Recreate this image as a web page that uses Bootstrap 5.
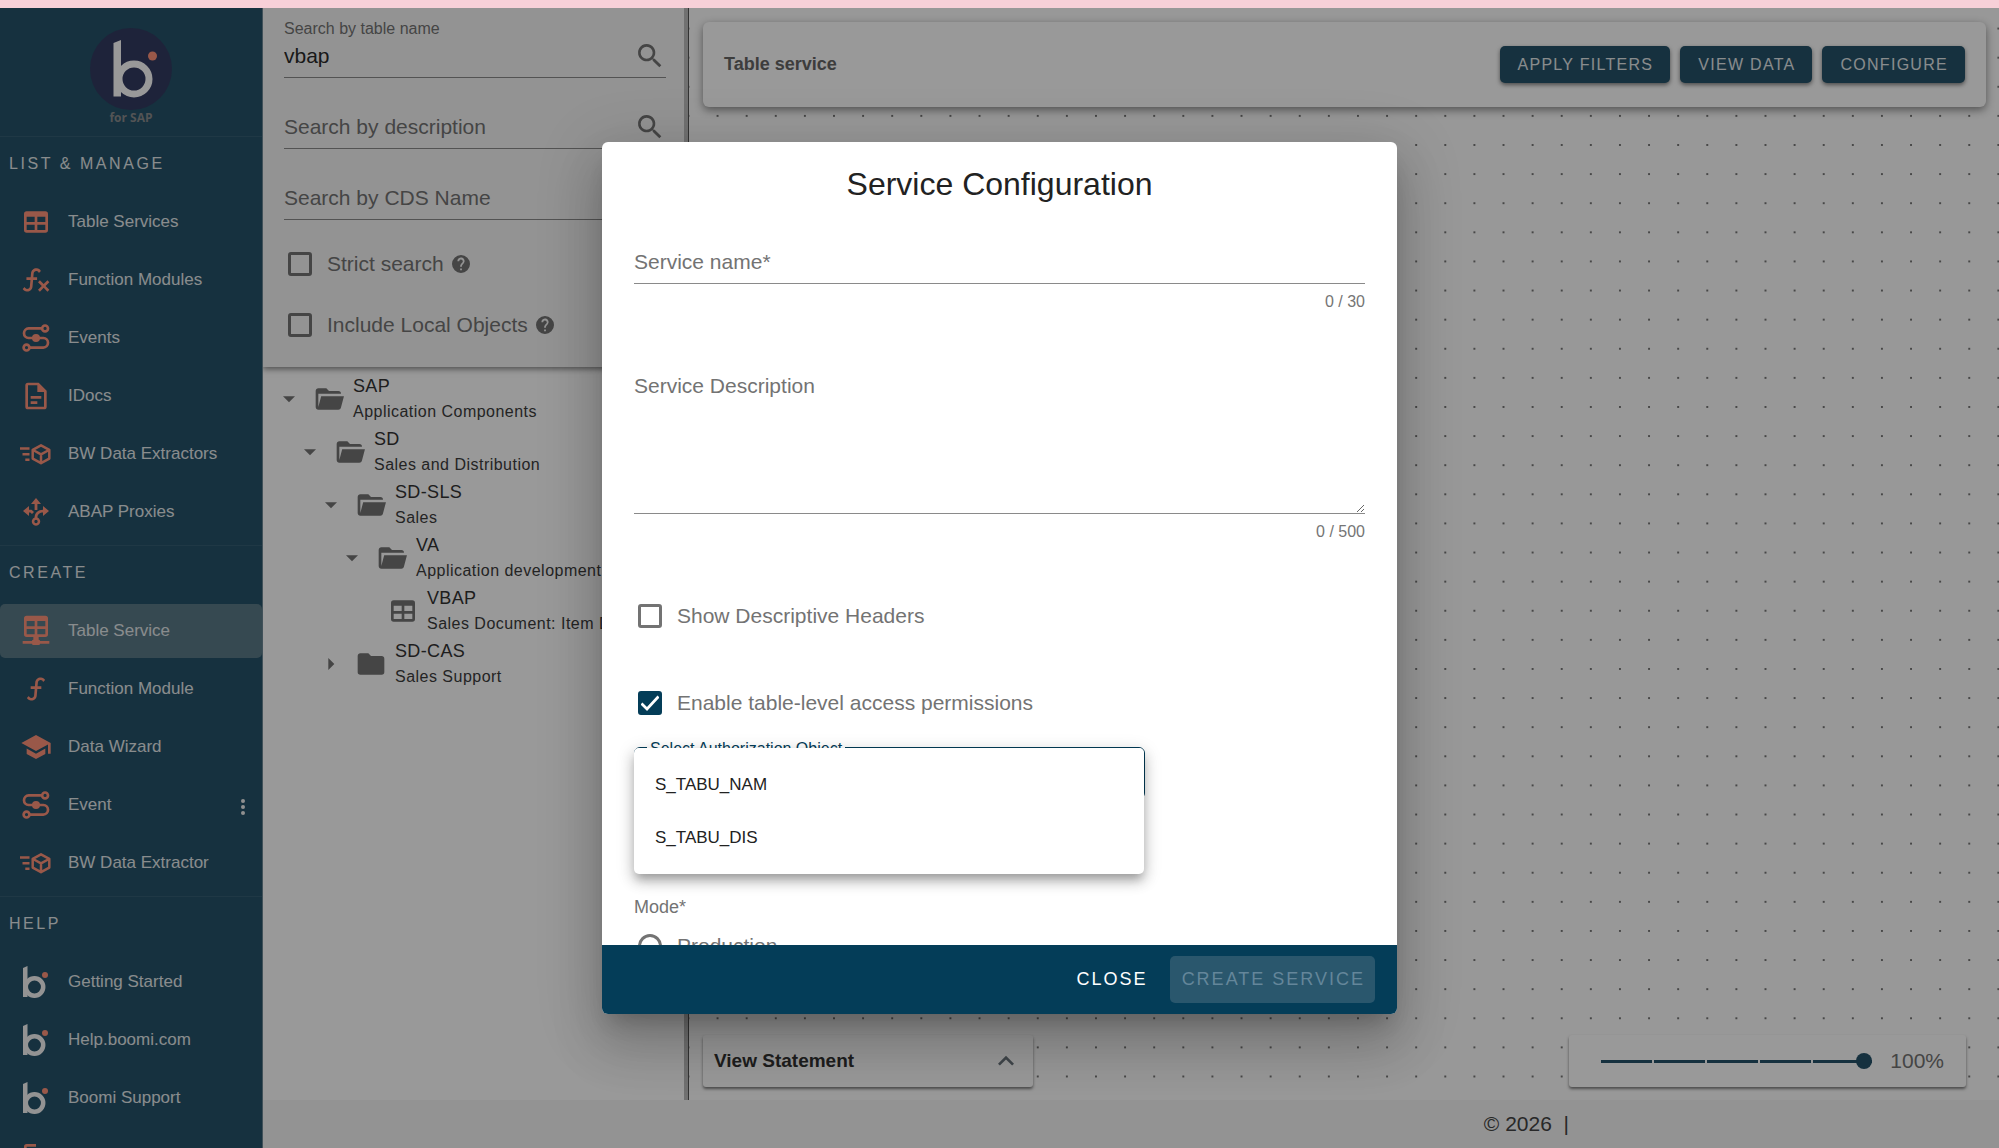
<!DOCTYPE html>
<html lang="en">
<head>
<meta charset="utf-8">
<meta name="viewport" content="width=device-width, initial-scale=1">
<title>Boomi for SAP - Table service</title>
<link href="https://cdn.jsdelivr.net/npm/bootstrap@5.3.0/dist/css/bootstrap.min.css" rel="stylesheet">
<style>
  :root { --brand: #043d58; --nav: #255269; --salmon: #ff937b; --ink: #737373; }
  body { font-family: "Liberation Sans", Arial, sans-serif; font-size: 21px; line-height: 26px; color: #333; background: #fff; }
  .env-strip { height: 8px; background: #f7d0d8; }
  .ico { width: 32px; height: 32px; fill: currentColor; flex: none; }

  /* sidebar */
  .side { width: 263px; background: var(--nav); border-right: 1px solid #6d8794; color: #e4e9ec; }
  .side-logo { height: 129px; padding-top: 20px; border-bottom: 1px solid #345e73; }
  .side-logo span { font: 700 12px/16px "Open Sans", sans-serif; color: #8a8c8e; }
  .side-group { padding-bottom: 4px; border-bottom: 1px solid #345e73; }
  .side-head { font-size: 16px; line-height: 54px; height: 56px; margin: 0; padding-left: 9px; letter-spacing: .16em; font-weight: 400; }
  .side-list { gap: 4px; padding: 2px 0; }
  .side-link { height: 54px; padding: 0 16px 0 20px; gap: 16px; font-size: 17px; color: inherit; text-decoration: none; border-radius: 5px; }
  .side-link .ico { color: var(--salmon); }
  .side-link.current { background: #5a7a87; }
  .more-btn { width: 6px; color: #f0f0f0; }

  /* explorer */
  .explorer { width: 421px; }
  .search-box { background: #f6f6f6; padding: 12px 18px 27px 21px; box-shadow: 0 2px 6px rgba(0,0,0,.5); z-index: 1; }
  .gap-fields { gap: 13px; }
  .line-field { position: relative; display: block; border-bottom: 1px solid #8a8a8a; color: var(--ink); }
  .line-field > label { position: absolute; left: 0; pointer-events: none; }
  .line-field > input, .line-field > textarea { display: block; width: 100%; border: 0; padding: 0; background: none; outline: 0; color: #2b2b2b; font-size: 21px; }
  .line-field.search { height: 58px; }
  .line-field.search > input { height: 44px; margin-top: 14px; }
  .line-field.search > label { top: 23px; }
  .line-field.search.filled > label { top: 1px; font-size: 16px; line-height: 16px; }
  .line-field .ico { position: absolute; right: 0; top: 20px; }
  .checks { padding-top: 29px; gap: 31px; }
  .tick-row { height: 30px; gap: 15px; padding-left: 4px; color: var(--ink); }
  .tick-row .form-check-input { width: 24px; height: 24px; margin: 0; border: 3px solid var(--ink); border-radius: 3px; flex: none; background-color: transparent; }
  .tick-row .form-check-input[type=radio] { border-radius: 50%; }
  .tick-row .form-check-input:checked { background: var(--brand) url("data:image/svg+xml,%3Csvg xmlns='http://www.w3.org/2000/svg' viewBox='0 0 24 24'%3E%3Cpath fill='none' stroke='%23fff' stroke-width='2.700' d='M3.500 12.500L9 18L20.500 5.500'/%3E%3C/svg%3E") center / 24px no-repeat; border-color: var(--brand); background-origin: border-box; }
  .hint { width: 18px; height: 18px; margin-left: -7px; }
  .tree { padding-top: 5px; }
  .tree-row { height: 53px; gap: 8px; padding-left: 10px; color: #737373; white-space: nowrap; }
  .tree-row .t1 { display: block; font-size: 18px; letter-spacing: .02em; color: #333; }
  .tree-row .t2 { display: block; font-size: 16px; letter-spacing: .03em; color: #3c3c3c; }
  .lv1 { padding-left: 31px; } .lv2 { padding-left: 52px; } .lv3 { padding-left: 73px; } .lv4 { padding-left: 124px; }
  .splitter { width: 5px; background: #bdbdbd; border-right: 1px solid #555; }

  /* canvas */
  .work { min-width: 0; }
  .board { background: #fdfdfd radial-gradient(circle, #777 1px, transparent 1px) 14px 6px / calc(100% / 45) calc(200% / 75); padding: 14px 13px 13px 14px; }
  .panel { background: #fff; border-radius: 6px; }
  .board-bar { height: 85px; padding: 0 21px; box-shadow: 0 3px 8px rgba(0,0,0,.45); }
  .board-bar h1 { font-size: 18px; font-weight: 700; color: #666; margin: 0; }
  .board-btns { gap: 10px; }
  .btn-brand { --bs-btn-bg: var(--nav); --bs-btn-color: #e4e9ec; --bs-btn-hover-bg: #1d465b; --bs-btn-hover-color: #fff; font-size: 16px; line-height: 37px; padding: 0 17px 0 18px; border: 0; border-radius: 5px; letter-spacing: .08em; box-shadow: 0 2px 4px rgba(0,0,0,.5); }
  .board-foot { height: 52px; border-radius: 3px; box-shadow: 0 2px 3px rgba(0,0,0,.5); }
  .statement { width: 330px; padding: 0 11px; border: 0; font-size: 19px; font-weight: 700; color: #333; }
  .zoom-ctl { width: 397px; padding: 0 22px 0 32px; margin-right: 20px; color: #737373; }
  .zoom-ctl input { appearance: none; width: 271px; height: 16px; margin: 0; background: repeating-linear-gradient(90deg, var(--nav) 0 51px, #fff 51px 53px) center / 100% 3px no-repeat; }
  .zoom-ctl input::-webkit-slider-thumb { appearance: none; width: 16px; height: 16px; border-radius: 50%; background: var(--nav); }
  .site-foot { height: 48px; background: #f5f5f5; padding-right: 430px; white-space: pre; color: #444; }

  /* dialog */
  .veil { position: absolute; inset: 0; background: rgba(0,0,0,.4); z-index: 5; }
  .dlg { width: 795px; height: calc(100vh - 276px); background: #fff; border-radius: 6px; overflow: hidden; box-shadow: 0 15px 20px -9px rgba(0,0,0,.2), 0 32px 50px 4px rgba(0,0,0,.14), 0 12px 61px 11px rgba(0,0,0,.12); }
  .dlg-body { padding: 0 32px; min-height: 0; overflow: hidden; }
  .dlg-body > * { flex: none; }
  .dlg-title { font-size: 32px; line-height: 84px; font-weight: 400; color: #222; margin: 0 0 15px; text-align: center; }
  .line-field.name > input { height: 42px; }
  .line-field.name > label, .line-field.desc > label { top: 8px; }
  .line-field.desc { margin-top: 51px; }
  .line-field.desc > textarea { height: 148px; resize: vertical; }
  .counter { font-size: 16px; line-height: 24px; margin-top: 6px; text-align: right; color: #757575; }
  .opt-checks { padding-top: 57px; gap: 57px; }
  .pick { position: relative; width: 511px; height: 52px; margin-top: 29px; }
  .pick select { width: 100%; height: 100%; border: 1px solid var(--brand); border-radius: 6px; background: #fff; appearance: none; }
  .pick > label { position: absolute; top: -7px; left: 13px; padding: 0 3px; background: #fff; font-size: 16px; line-height: 18px; color: var(--brand); }
  .pick-menu { position: absolute; top: 1px; left: 0; width: 510px; margin: 0; padding: 10px 0; list-style: none; background: #fff; border-radius: 5px; box-shadow: 0 7px 9px -3px rgba(0,0,0,.2), 0 7px 13px 1px rgba(0,0,0,.16), 0 4px 18px 2px rgba(0,0,0,.12); }
  .pick-menu li { font-size: 17px; line-height: 53px; padding: 0 21px; color: #222; }
  .mode-head { font-size: 18px; font-weight: 400; line-height: 26px; color: var(--ink); margin: 95px 0 11px; }
  .dlg-foot { height: 69px; background: var(--brand); padding-right: 22px; gap: 12px; flex: none; }
  .dlg-foot .btn { font-size: 18px; line-height: 47px; padding: 0 10px 0 12px; border: 0; border-radius: 5px; letter-spacing: 2px; color: #fff; }
  .dlg-foot .btn:disabled { background: #2a576d; color: #64869a; opacity: 1; }
</style>
</head>
<body class="vh-100 overflow-hidden d-flex flex-column">

<svg class="d-none" aria-hidden="true">
  <symbol id="i-table" viewBox="0 0 24 24"><path d="M5,4H19A2,2 0 0,1 21,6V18A2,2 0 0,1 19,20H5A2,2 0 0,1 3,18V6A2,2 0 0,1 5,4M5,8V12H11V8H5M13,8V12H19V8H13M5,14V18H11V14H5M13,14V18H19V14H13Z"/></symbol>
  <symbol id="i-tablenet" viewBox="0 0 24 24"><path d="M5,.5H19A2,2 0 0,1 21,2.500V14.500A2,2 0 0,1 19,16.500H14V18.500A1,1 0 0,1 15,19.500H22V21.500H15A1,1 0 0,1 14,22.500H10A1,1 0 0,1 9,21.500H2V19.500H9A1,1 0 0,1 10,18.500V16.500H5A2,2 0 0,1 3,14.500V2.500A2,2 0 0,1 5,.5M5,4.500V8.500H11V4.500H5M13,4.500V8.500H19V4.500H13M5,10.500V14.500H11V10.500H5M13,10.500V14.500H19V10.500H13Z"/></symbol>
  <symbol id="i-fx" viewBox="0 0 24 24"><path d="M12.42,5.29C11.32,5.19 10.35,6 10.25,7.11L10,10H12.82V12H9.82L9.38,17.07C9.18,19.27 7.24,20.9 5.04,20.7C3.79,20.59 2.66,19.9 2,18.83L3.5,17.33C3.83,18.38 4.96,18.97 6,18.63C6.78,18.39 7.33,17.7 7.4,16.89L7.82,12H4.82V10H8L8.27,6.93C8.46,4.73 10.39,3.1 12.6,3.28C13.86,3.39 15,4.09 15.66,5.17L14.16,6.67C13.91,5.9 13.23,5.36 12.42,5.29M22,13.65L20.59,12.24L17.76,15.07L14.93,12.24L13.5,13.65L16.35,16.5L13.5,19.31L14.93,20.72L17.76,17.89L20.59,20.72L22,19.31L19.17,16.5L22,13.65Z"/></symbol>
  <symbol id="i-f" viewBox="0 0 24 24"><path d="M15.6,5.29C14.5,5.19 13.53,6 13.43,7.11L13.18,10H16V12H13L12.56,17.07C12.37,19.27 10.43,20.9 8.23,20.7C6.92,20.59 5.82,19.86 5.17,18.83L6.67,17.33C6.91,18.07 7.57,18.64 8.4,18.71C9.5,18.81 10.47,18 10.57,16.89L11,12H8V10H11.17L11.44,6.93C11.63,4.73 13.57,3.1 15.77,3.3C17.08,3.41 18.18,4.14 18.83,5.17L17.33,6.67C17.09,5.93 16.43,5.36 15.6,5.29Z"/></symbol>
  <symbol id="i-event" viewBox="0 0 24 24"><g fill="none" stroke="currentColor" stroke-width="2"><circle cx="18.800" cy="4.800" r="2.200"/><circle cx="4.900" cy="19.200" r="2.200"/><path d="M16.500,4.800H6.500A3.600,3.600 0 0,0 3,8.400A3.600,3.600 0 0,0 6.500,12H17.500A3.600,3.600 0 0,1 21,15.600A3.600,3.600 0 0,1 17.500,19.200H7.200"/></g><circle cx="12" cy="12" r="3"/></symbol>
  <symbol id="i-doc" viewBox="0 0 24 24"><path d="M6,2A2,2 0 0,0 4,4V20A2,2 0 0,0 6,22H18A2,2 0 0,0 20,20V8L14,2H6M6,4H13V9H18V20H6V4M8,12V14H16V12H8M8,16V18H13V16H8Z"/></symbol>
  <symbol id="i-cube" viewBox="0 0 32 32"><g fill="none" stroke="currentColor" stroke-width="2.500" stroke-linejoin="round"><path d="M21,7.300L29.300,11.800V20.600L21,25.200L12.700,20.600V11.800ZM13,12L21,16.400L29,12M21,16.400V25"/><path d="M-.5,10.600H9.500M2.500,16.200H9.500M5.300,21.800H9.500"/></g></symbol>
  <symbol id="i-proxy" viewBox="0 0 32 32"><path d="M16,2L21,8H17.400V14H14.600V8H11ZM3,15L9,10V13.700H11.500L14,16L12,18L10.300,16.400H9V20ZM29,15L23,10V13.700C18,13.700 14.600,17 14.600,21.500A4.200,4.200 0 1,0 17.400,21.500C17.400,18 20,16.400 23,16.400V20ZM16,23.800A1.700,1.700 0 1,1 16,27.200A1.700,1.700 0 1,1 16,23.800Z"/></symbol>
  <symbol id="i-cap" viewBox="0 0 24 24"><path d="M12,3L1,9L12,15L21,10.090V17H23V9M5,13.180V17.180L12,21L19,17.180V13.180L12,17L5,13.180Z"/></symbol>
  <symbol id="i-boomi" viewBox="0 0 32 32"><path fill="#f6f6f6" d="M3,2L7.500,0V31H3Z"/><circle cx="14.500" cy="21" r="8.700" fill="none" stroke="#f6f6f6" stroke-width="4.500"/><circle cx="25" cy="9" r="3"/></symbol>
  <symbol id="i-exit" viewBox="0 0 24 24"><path d="M5,3H12V5H5V19H12V21H5A2,2 0 0,1 3,19V5A2,2 0 0,1 5,3Z"/></symbol>
  <symbol id="i-search" viewBox="0 0 24 24"><path d="M15.5,14H14.710L14.430,13.730A6.500,6.500 0 1,0 13.730,14.430L14,14.710V15.500L19,20.490L20.490,19ZM9.500,14A4.500,4.500 0 1,1 14,9.500A4.500,4.500 0 0,1 9.500,14Z"/></symbol>
  <symbol id="i-help" viewBox="2 2 20 20"><path d="M12,2A10,10 0 1,0 22,12A10,10 0 0,0 12,2M13,19H11V17H13V19M15.070,11.250L14.170,12.170C13.450,12.900 13,13.500 13,15H11V14.500C11,13.400 11.450,12.400 12.170,11.670L13.410,10.410A2,2 0 1,0 10,9H8A4,4 0 1,1 15.070,11.250Z"/></symbol>
  <symbol id="i-open" viewBox="0 0 24 24"><path d="M19,20H4C2.890,20 2,19.100 2,18V6C2,4.890 2.890,4 4,4H10L12,6H19A2,2 0 0,1 21,8H4V18L6.140,10H23.210L20.930,18.500C20.700,19.370 19.920,20 19,20Z"/></symbol>
  <symbol id="i-folder" viewBox="0 0 24 24"><path d="M10,4H4C2.890,4 2,4.890 2,6V18A2,2 0 0,0 4,20H20A2,2 0 0,0 22,18V8C22,6.890 21.100,6 20,6H12Z"/></symbol>
  <symbol id="i-down" viewBox="0 0 24 24"><path d="M7.500,10L12,14.500L16.500,10Z"/></symbol>
  <symbol id="i-right" viewBox="0 0 24 24"><path d="M10,16.500L14.500,12L10,7.500Z"/></symbol>
  <symbol id="i-up" viewBox="0 0 24 24"><path d="M7.410,15.410L12,10.830L16.590,15.410L18,14L12,8L6,14Z"/></symbol>
  <symbol id="i-more" viewBox="0 0 6 18"><circle cx="3" cy="3" r="2"/><circle cx="3" cy="9" r="2"/><circle cx="3" cy="15" r="2"/></symbol>
</svg>

<div class="env-strip flex-shrink-0"></div>

<div class="position-relative flex-grow-1 d-flex overflow-hidden">

  <nav class="side flex-shrink-0 overflow-hidden" aria-label="Main">
    <div class="side-logo d-flex flex-column align-items-center">
      <svg width="82" height="82" viewBox="0 0 82 82" role="img" aria-label="Boomi"><circle cx="41" cy="41" r="41" fill="#333b61"/><path fill="#fff" d="M23.500,15L31,12V68.500H23.500Z"/><circle cx="44" cy="51" r="15" fill="none" stroke="#fff" stroke-width="7"/><circle cx="62.500" cy="28" r="4.500" fill="#ff937b"/></svg>
      <span>for SAP</span>
    </div>
    <div class="side-group">
      <h2 class="side-head">LIST &amp; MANAGE</h2>
      <div class="side-list d-flex flex-column">
        <a href="#" class="side-link d-flex align-items-center"><svg class="ico"><use href="#i-table"/></svg>Table Services</a>
        <a href="#" class="side-link d-flex align-items-center"><svg class="ico"><use href="#i-fx"/></svg>Function Modules</a>
        <a href="#" class="side-link d-flex align-items-center"><svg class="ico"><use href="#i-event"/></svg>Events</a>
        <a href="#" class="side-link d-flex align-items-center"><svg class="ico"><use href="#i-doc"/></svg>IDocs</a>
        <a href="#" class="side-link d-flex align-items-center"><svg class="ico overflow-visible"><use href="#i-cube"/></svg>BW Data Extractors</a>
        <a href="#" class="side-link d-flex align-items-center"><svg class="ico"><use href="#i-proxy"/></svg>ABAP Proxies</a>
      </div>
    </div>
    <div class="side-group">
      <h2 class="side-head">CREATE</h2>
      <div class="side-list d-flex flex-column">
        <a href="#" class="side-link current d-flex align-items-center" aria-current="page"><svg class="ico"><use href="#i-tablenet"/></svg>Table Service</a>
        <a href="#" class="side-link d-flex align-items-center"><svg class="ico"><use href="#i-f"/></svg>Function Module</a>
        <a href="#" class="side-link d-flex align-items-center"><svg class="ico"><use href="#i-cap"/></svg>Data Wizard</a>
        <div class="d-flex align-items-center justify-content-between pe-3">
          <a href="#" class="side-link d-flex align-items-center"><svg class="ico"><use href="#i-event"/></svg>Event</a>
          <button type="button" class="more-btn btn p-0 pt-1 border-0 d-flex" aria-label="More"><svg width="6" height="18" fill="currentColor"><use href="#i-more"/></svg></button>
        </div>
        <a href="#" class="side-link d-flex align-items-center"><svg class="ico overflow-visible"><use href="#i-cube"/></svg>BW Data Extractor</a>
      </div>
    </div>
    <div class="side-group">
      <h2 class="side-head">HELP</h2>
      <div class="side-list d-flex flex-column">
        <a href="#" class="side-link d-flex align-items-center"><svg class="ico"><use href="#i-boomi"/></svg>Getting Started</a>
        <a href="#" class="side-link d-flex align-items-center"><svg class="ico"><use href="#i-boomi"/></svg>Help.boomi.com</a>
        <a href="#" class="side-link d-flex align-items-center"><svg class="ico"><use href="#i-boomi"/></svg>Boomi Support</a>
        <a href="#" class="side-link d-flex align-items-center" aria-label="Log out"><svg class="ico"><use href="#i-exit"/></svg></a>
      </div>
    </div>
  </nav>

  <div class="work flex-grow-1 d-flex flex-column">
    <div class="flex-grow-1 d-flex overflow-hidden">

      <aside class="explorer flex-shrink-0 d-flex flex-column overflow-hidden">
        <form class="search-box">
          <div class="d-flex flex-column gap-fields">
            <div class="line-field search filled"><label for="q-table">Search by table name</label><input id="q-table" type="text" value="vbap"><svg class="ico"><use href="#i-search"/></svg></div>
            <div class="line-field search"><label for="q-desc">Search by description</label><input id="q-desc" type="text"><svg class="ico"><use href="#i-search"/></svg></div>
            <div class="line-field search"><label for="q-cds">Search by CDS Name</label><input id="q-cds" type="text"><svg class="ico"><use href="#i-search"/></svg></div>
          </div>
          <div class="checks d-flex flex-column">
            <div class="tick-row d-flex align-items-center"><input class="form-check-input" type="checkbox" id="c-strict"><label for="c-strict">Strict search</label><svg class="ico hint"><use href="#i-help"/></svg></div>
            <div class="tick-row d-flex align-items-center"><input class="form-check-input" type="checkbox" id="c-local"><label for="c-local">Include Local Objects</label><svg class="ico hint"><use href="#i-help"/></svg></div>
          </div>
        </form>
        <div class="tree">
          <div class="tree-row d-flex align-items-center"><svg class="ico"><use href="#i-down"/></svg><svg class="ico"><use href="#i-open"/></svg><div><span class="t1">SAP</span><span class="t2">Application Components</span></div></div>
          <div class="tree-row lv1 d-flex align-items-center"><svg class="ico"><use href="#i-down"/></svg><svg class="ico"><use href="#i-open"/></svg><div><span class="t1">SD</span><span class="t2">Sales and Distribution</span></div></div>
          <div class="tree-row lv2 d-flex align-items-center"><svg class="ico"><use href="#i-down"/></svg><svg class="ico"><use href="#i-open"/></svg><div><span class="t1">SD-SLS</span><span class="t2">Sales</span></div></div>
          <div class="tree-row lv3 d-flex align-items-center"><svg class="ico"><use href="#i-down"/></svg><svg class="ico"><use href="#i-open"/></svg><div><span class="t1">VA</span><span class="t2">Application development</span></div></div>
          <div class="tree-row lv4 d-flex align-items-center"><svg class="ico"><use href="#i-table"/></svg><div><span class="t1">VBAP</span><span class="t2">Sales Document: Item Data</span></div></div>
          <div class="tree-row lv2 d-flex align-items-center"><svg class="ico"><use href="#i-right"/></svg><svg class="ico"><use href="#i-folder"/></svg><div><span class="t1">SD-CAS</span><span class="t2">Sales Support</span></div></div>
        </div>
      </aside>

      <div class="splitter flex-shrink-0"></div>

      <main class="board flex-grow-1 d-flex flex-column justify-content-between">
        <header class="panel board-bar d-flex align-items-center justify-content-between">
          <h1>Table service</h1>
          <div class="board-btns d-flex">
            <button type="button" class="btn btn-brand">APPLY FILTERS</button>
            <button type="button" class="btn btn-brand">VIEW DATA</button>
            <button type="button" class="btn btn-brand">CONFIGURE</button>
          </div>
        </header>
        <div class="d-flex justify-content-between">
          <button type="button" class="panel board-foot statement d-flex align-items-center justify-content-between">View Statement<svg class="ico text-secondary"><use href="#i-up"/></svg></button>
          <div class="panel board-foot zoom-ctl d-flex align-items-center justify-content-between">
            <input type="range" id="zoom" min="0" max="100" step="20" value="100"><label for="zoom">100%</label>
          </div>
        </div>
      </main>
    </div>
    <footer class="site-foot d-flex align-items-center justify-content-end flex-shrink-0">© 2026  |</footer>
  </div>

  <div class="veil d-flex align-items-center justify-content-center">
    <form class="dlg d-flex flex-column" role="dialog" aria-labelledby="dlg-title">
      <div class="dlg-body flex-grow-1 d-flex flex-column">
        <h2 class="dlg-title" id="dlg-title">Service Configuration</h2>
        <div class="line-field name"><label for="s-name">Service name*</label><input id="s-name" type="text" maxlength="30"></div>
        <div class="counter">0 / 30</div>
        <div class="line-field desc"><label for="s-desc">Service Description</label><textarea id="s-desc" maxlength="500"></textarea></div>
        <div class="counter">0 / 500</div>
        <div class="opt-checks d-flex flex-column">
          <div class="tick-row d-flex align-items-center"><input class="form-check-input" type="checkbox" id="c-head"><label for="c-head">Show Descriptive Headers</label></div>
          <div class="tick-row d-flex align-items-center"><input class="form-check-input" type="checkbox" id="c-perm" checked><label for="c-perm">Enable table-level access permissions</label></div>
        </div>
        <div class="pick">
          <select id="s-auth"><option></option><option>S_TABU_NAM</option><option>S_TABU_DIS</option></select>
          <label for="s-auth">Select Authorization Object</label>
          <ul class="pick-menu" role="listbox"><li role="option">S_TABU_NAM</li><li role="option">S_TABU_DIS</li></ul>
        </div>
        <h3 class="mode-head">Mode*</h3>
        <div class="tick-row d-flex align-items-center"><input class="form-check-input" type="radio" name="mode" id="m-prod"><label for="m-prod">Production</label></div>
      </div>
      <div class="dlg-foot d-flex align-items-center justify-content-end">
        <button type="button" class="btn">CLOSE</button>
        <button type="submit" class="btn" disabled>CREATE SERVICE</button>
      </div>
    </form>
  </div>
</div>

<script src="https://cdn.jsdelivr.net/npm/bootstrap@5.3.0/dist/js/bootstrap.bundle.min.js"></script>
</body>
</html>
